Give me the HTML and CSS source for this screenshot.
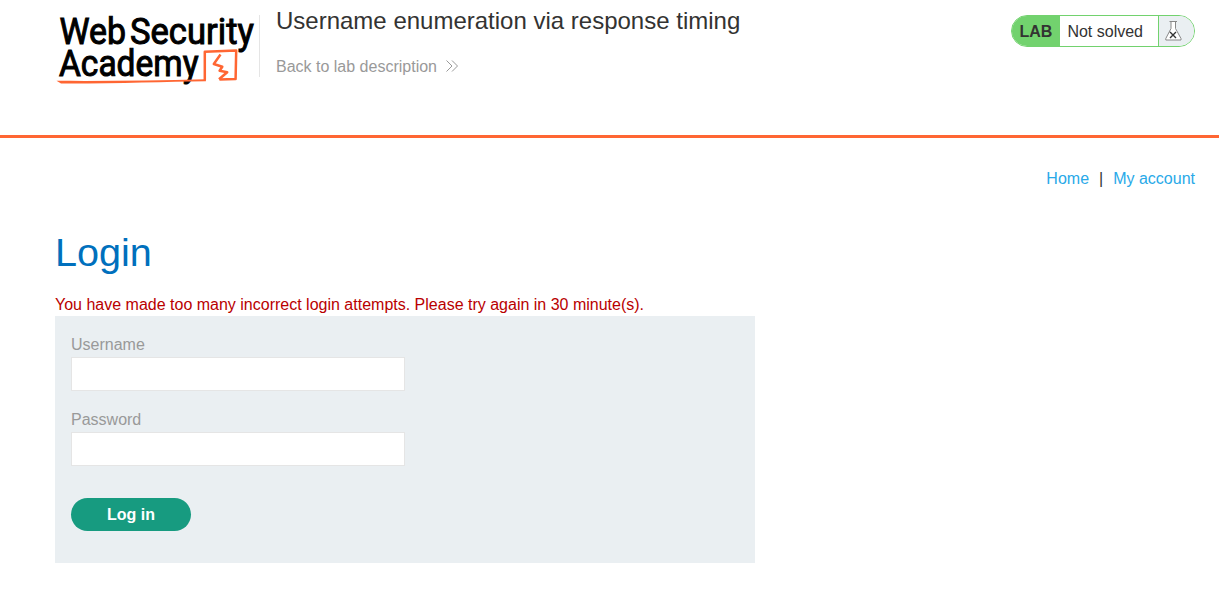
FILE: index.html
```html
<!DOCTYPE html>
<html lang="en">
<head>
<meta charset="utf-8">
<title>Username enumeration via response timing</title>
<link rel="stylesheet" href="styles.css">
</head>
<body>
<header class="lab-header">
  <svg class="logo" width="204" height="90" viewBox="0 0 204 90" role="img" aria-label="Web Security Academy">
    <g class="logo-text">
      <text x="4.5" y="43.5" textLength="66.5" lengthAdjust="spacingAndGlyphs">Web</text>
      <text x="75" y="43.5" textLength="123.8" lengthAdjust="spacingAndGlyphs">Security</text>
      <text x="4" y="76" textLength="139.5" lengthAdjust="spacingAndGlyphs">Academy</text>
    </g>
    <g class="logo-mark">
      <path d="M149.8 80.3L149.8 51.8L181.2 50.6L180.6 79L164.5 79.6"/>
      <path d="M165.5 54.5L158.8 64L167.3 66.7L164.6 70.8L172.2 72.2L164 79.3"/>
      <path class="underline" d="M1.5 80.8C50 81.3 100 80.4 150.9 79.2V81.2C110 81.8 60 83.7 6 83.5Z"/>
    </g>
  </svg>
  <div class="title-block">
    <h2 class="lab-title">Username enumeration via response timing</h2>
    <a class="back-link">Back to lab description
      <svg class="chevrons" width="12" height="12" viewBox="0 0 12 12"><path d="M.5 .5L6 6L.5 11.5M6 .5L11.5 6L6 11.5"/></svg>
    </a>
  </div>
  <div class="lab-status">
    <span class="lab-tag">LAB</span>
    <span class="lab-state">Not solved</span>
    <span class="lab-icon">
      <svg width="17" height="21" viewBox="0 0 17 21">
        <path class="flask" d="M4.5 1.5H12M6 1.5V8.5L.8 18.5V20H16V18.5L10.5 8.5V1.5"/>
        <path class="cross" d="M5 12L11 18M11 12L5 18"/>
      </svg>
    </span>
  </div>
</header>
<main class="content">
  <nav class="nav"><a>Home</a><span>|</span><a>My account</a></nav>
  <h1 class="heading">Login</h1>
  <p class="warning">You have made too many incorrect login attempts. Please try again in 30 minute(s).</p>
  <form class="login-form">
    <label for="username">Username</label>
    <input id="username" type="text">
    <label for="password">Password</label>
    <input id="password" type="password">
    <button type="button">Log in</button>
  </form>
</main>
</body>
</html>
```
FILE: styles.css
```css
* { box-sizing: border-box; }
body {
  margin: 0;
  background: #fff;
  color: #333332;
  font: 16px/20px "Liberation Sans", Arial, sans-serif;
}
.lab-header {
  display: flex;
  align-items: flex-start;
  height: 138px;
  padding: 0 24px 0 55px;
  border-bottom: 3px solid #ff6633;
}
.logo { flex: none; overflow: visible; }
.logo-text { font: 400 36.5px Roboto, sans-serif; fill: #000; stroke: #000; stroke-width: 1; }
.logo-mark { fill: none; stroke: #ff6633; stroke-width: 2.5; stroke-linejoin: round; }
.underline { fill: #ff6633; stroke: none; }
.title-block {
  flex: 1;
  height: 62px;
  margin-top: 15px;
  padding-left: 16px;
  border-left: 1px solid #e5e5e5;
}
.lab-title { margin: -9px 0 0; font-size: 24px; font-weight: 400; line-height: 30px; }
.back-link { display: flex; align-items: center; gap: 9px; margin-top: 20px; color: #999; line-height: 22px; }
.chevrons { margin-top: -2px; fill: none; stroke: #999; stroke-width: 1; }
.lab-status {
  display: flex;
  width: 184px;
  height: 32px;
  margin-top: 15px;
  border: 1px solid #72d26e;
  border-radius: 16px;
  overflow: hidden;
  line-height: 32px;
}
.lab-tag { width: 48px; padding-left: 7.4px; background: #72d26e; font-weight: 700; }
.lab-state { width: 98px; padding-left: 7.4px; white-space: nowrap; }
.lab-icon { flex: 1; padding: 4px 0 0 6px; border-left: 1px solid #72d26e; background: #eaeff2; line-height: 0; }
.flask { fill: #fff; stroke: #888; stroke-width: 1; }
.cross { fill: none; stroke: #333; stroke-width: 1.4; }
.content { padding: 31px 24px 0 55px; }
.nav { display: flex; justify-content: flex-end; gap: 10px; }
.nav a { color: #29a9e8; }
.heading { margin: 40px 0 0; color: #0070bd; font-size: 39.6px; font-weight: 400; line-height: 46px; }
.warning { margin: 20px 0 0; color: #b90000; }
.login-form {
  display: flex;
  flex-direction: column;
  align-items: flex-start;
  width: 700px;
  height: 247px;
  margin-top: 1px;
  padding: 19px 16px;
  background: #eaeff2;
}
.login-form label { color: #999; }
.login-form input {
  width: 334px;
  height: 34px;
  margin: 2px 0 19px;
  border: 1px solid #e5e5e5;
  background: #fff;
}
.login-form button {
  width: 120px;
  height: 33px;
  margin-top: 13px;
  padding: 1px 0 0;
  border: 0;
  border-radius: 17px;
  background: #179b80;
  color: #fff;
  font: 700 16px/32px "Liberation Sans", Arial, sans-serif;
}
```
